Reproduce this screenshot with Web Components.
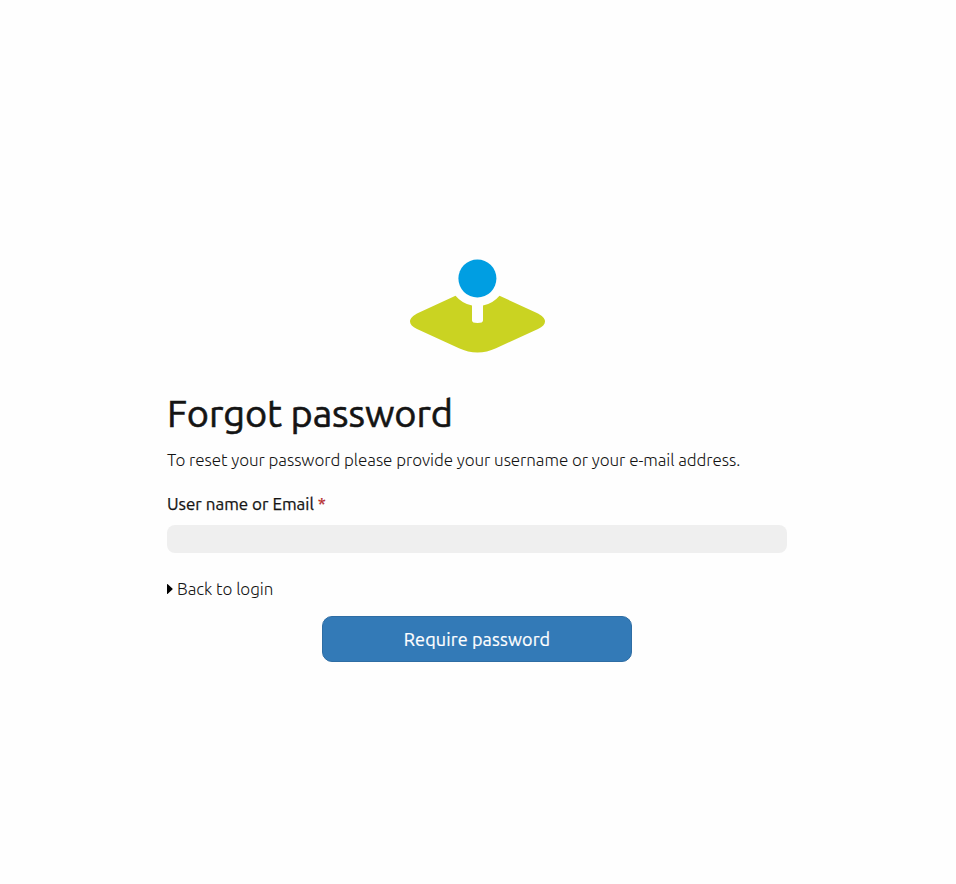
<!DOCTYPE html>
<html lang="en"><head><meta charset="utf-8"><title>Forgot password</title>
<style>
html,body{margin:0;height:100%;background:#fefefe}
body{font-family:Ubuntu,"Noto Sans",sans-serif;color:#141414}
</style></head><body>
<forgot-page></forgot-page>
<script>
const define=(name,html)=>customElements.define(name,class extends HTMLElement{
  constructor(){super();this.attachShadow({mode:'open'}).innerHTML=html;}
});
define('brand-logo',`<style>:host{display:block;width:136px;height:94px}svg{display:block}</style>
<svg width="136" height="94" viewBox="0 0 136 94" aria-hidden="true">
<path fill="#cad322" d="M45.500 36.7 7 54.500Q0 58.5 0 62.5Q0 66.5 7 70L49 89.3Q58 93.5 67.5 93.5Q77 93.5 86 89.3L128 70Q135 66.5 135 62.5Q135 58.500 128 54.500L89.500 36.700A29 29 0 0 1 73 46.500V61.500Q73 64 67.500 64Q62 64 62 61.500V46.500A29 29 0 0 1 45.500 36.700Z"/>
<circle cx="67.400" cy="19.500" r="19" fill="#009ee2"/></svg>`);
define('page-title',`<style>:host{display:block}h1{margin:0;font-size:38px;line-height:44px;font-weight:400;letter-spacing:-.1px;-webkit-text-stroke:.6px currentColor}</style><h1><slot></slot></h1>`);
define('body-copy',`<style>:host{display:block}p{margin:0;font-size:17px;line-height:24px;font-weight:300;letter-spacing:-.06px}</style><p><slot></slot></p>`);
define('text-field',`<style>:host{display:block}label{display:block;font-size:17px;line-height:24px;font-weight:450;letter-spacing:0;-webkit-text-stroke:.25px currentColor}span{color:#b52b2b}
input{display:block;box-sizing:border-box;width:100%;height:28px;margin:9px 0 0;padding:0 12px;border:0;border-radius:8px;background:#efefef;font:inherit;outline:0}</style>
<label for="f"><slot></slot> <span>*</span></label><input id="f" type="text">`);
define('back-link',`<style>:host{display:block}a{display:flex;align-items:center;gap:4px;color:inherit;text-decoration:none;font-size:17px;line-height:24px;font-weight:300;letter-spacing:-.06px}svg{display:block}</style>
<a href="#"><svg width="6" height="10" viewBox="0 0 6 10"><path d="M0 .6Q0-.4.8.3L5.400 4.500Q6 5 5.400 5.500L.8 9.700Q0 10.400 0 9.400Z"/></svg><slot></slot></a>`);
define('primary-button',`<style>:host{display:block}button{display:block;box-sizing:border-box;width:310px;height:46px;padding:0;border:1px solid #2e6da4;border-radius:10px;background:#337ab7;color:#fff;font:400 18px/26px Ubuntu,"Noto Sans",sans-serif;letter-spacing:.13px;-webkit-text-stroke:.2px currentColor}</style><button><slot></slot></button>`);
define('forgot-page',`<style>:host{display:block;width:620px;margin-left:167px;padding-top:259px}
form{display:flex;flex-direction:column}brand-logo,primary-button{align-self:center}brand-logo{margin-left:2px}page-title{margin-top:38px}body-copy{margin-top:13px}text-field{margin-top:20px}back-link{margin-top:24px}primary-button{margin-top:15px}</style>
<form><brand-logo></brand-logo><page-title>Forgot password</page-title>
<body-copy>To reset your password please provide your username or your e-mail address.</body-copy>
<text-field>User name or Email</text-field><back-link>Back to login</back-link><primary-button>Require password</primary-button></form>`);
</script></body></html>
